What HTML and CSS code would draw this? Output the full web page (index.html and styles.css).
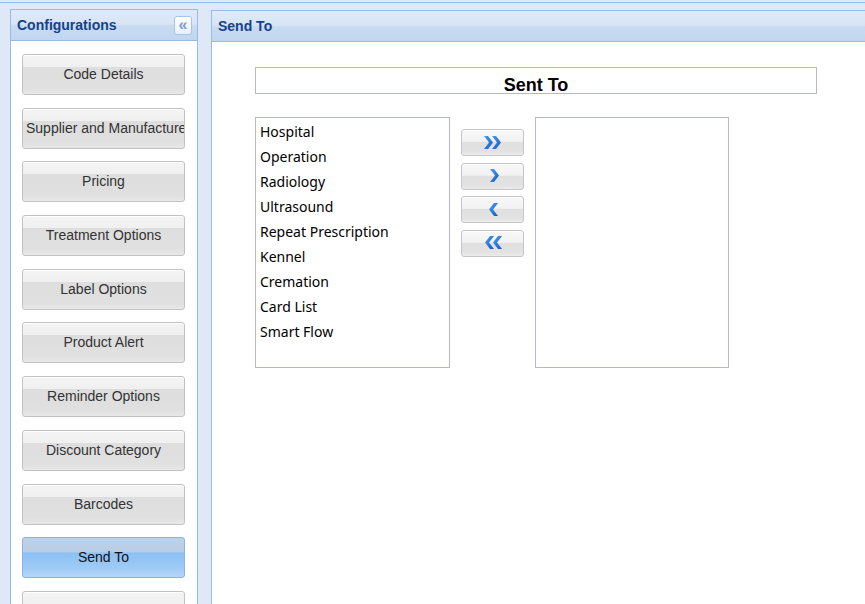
FILE: index.html
```html
<!DOCTYPE html>
<html lang="en">
<head>
    <meta charset="UTF-8">
    <title>Configurations - Send To</title>
    <link rel="stylesheet" href="styles.css">
</head>
<body>
    <svg width="0" height="0" class="defs">
        <defs>
            <linearGradient id="arrowBlue" x1="0" y1="0" x2="1" y2="1">
                <stop offset="0" stop-color="#4aa0ee" />
                <stop offset="1" stop-color="#1658c4" />
            </linearGradient>
        </defs>
    </svg>
    <div class="topline"></div>
    <div class="layout">
        <!-- Left: configuration menu -->
        <aside class="panel side">
            <div class="panel-header">
                <span class="panel-title">Configurations</span>
                <span class="collapse-btn">&laquo;</span>
            </div>
            <div class="side-body">
                <button class="menu-btn">Code Details</button>
                <button class="menu-btn long">Supplier and Manufacturer</button>
                <button class="menu-btn">Pricing</button>
                <button class="menu-btn">Treatment Options</button>
                <button class="menu-btn">Label Options</button>
                <button class="menu-btn">Product Alert</button>
                <button class="menu-btn">Reminder Options</button>
                <button class="menu-btn">Discount Category</button>
                <button class="menu-btn">Barcodes</button>
                <button class="menu-btn active">Send To</button>
                <button class="menu-btn"></button>
            </div>
        </aside>

        <!-- Right: Send To settings -->
        <section class="panel main">
            <div class="panel-header">
                <span class="panel-title">Send To</span>
            </div>
            <div class="main-body">
                <div class="title-box">Sent To</div>
                <div class="picker">
                    <ul class="list-box">
                        <li>Hospital</li>
                        <li>Operation</li>
                        <li>Radiology</li>
                        <li>Ultrasound</li>
                        <li>Repeat Prescription</li>
                        <li>Kennel</li>
                        <li>Cremation</li>
                        <li>Card List</li>
                        <li>Smart Flow</li>
                    </ul>
                    <div class="move-btns">
                        <button class="move-btn" title="Add all">
                            <svg width="18" height="13" viewBox="0 0 18 13"><polygon points="0,0 4,0 9,6.5 4,13 0,13 5,6.5" /><polygon points="8,0 12,0 17,6.5 12,13 8,13 13,6.5" /></svg>
                        </button>
                        <button class="move-btn" title="Add">
                            <svg width="18" height="13" viewBox="0 0 18 13"><polygon points="6,0 10,0 15,6.5 10,13 6,13 11,6.5" /></svg>
                        </button>
                        <button class="move-btn" title="Remove">
                            <svg width="18" height="13" viewBox="0 0 18 13"><polygon points="14,0 10,0 5,6.5 10,13 14,13 9,6.5" /></svg>
                        </button>
                        <button class="move-btn" title="Remove all">
                            <svg width="18" height="13" viewBox="0 0 18 13"><polygon points="10,0 6,0 1,6.5 6,13 10,13 5,6.5" /><polygon points="18,0 14,0 9,6.5 14,13 18,13 13,6.5" /></svg>
                        </button>
                    </div>
                    <ul class="list-box"></ul>
                </div>
            </div>
        </section>
    </div>
</body>
</html>
```

FILE: styles.css
```css
html, body {
    margin: 0;
    height: 100%;
    overflow: hidden;
}

body {
    background-color: #dfe8f6;
    font-family: "Liberation Sans", Arial, sans-serif;
    font-size: 14px;
    color: #333;
}

.defs {
    position: absolute;
}

.topline {
    height: 2px;
    border-bottom: 1px solid #99bbe8;
}

.layout {
    display: flex;
    align-items: flex-start;
    gap: 13px;
    padding: 6px 0 0 10px;
}

/* Panels */
.panel {
    border: 1px solid #99bbe8;
    background-color: #fff;
    height: 640px;
}

.side {
    width: 186px;
    flex: none;
}

.main {
    flex: 1;
    margin-top: 1px;
    border-right: none;
}

.panel-header {
    height: 30px;
    display: flex;
    align-items: center;
    justify-content: space-between;
    padding: 0 5px 0 6px;
    border-bottom: 1px solid #99bbe8;
    background: linear-gradient(#e0ebf8, #d6e4f5 48%, #c8dbf1 52%, #c2d6f0);
}

.panel-title {
    font-weight: bold;
    font-size: 14px;
    color: #15428b;
}

.collapse-btn {
    width: 16px;
    height: 17px;
    line-height: 15px;
    text-align: center;
    font-size: 16px;
    font-weight: bold;
    color: #7a9bd0;
    background: linear-gradient(#ffffff, #e8f0fb);
    border: 1px solid #a8c4ea;
    border-radius: 3px;
    margin-top: 1px;
}

/* Side menu */
.side-body {
    display: flex;
    flex-direction: column;
    gap: 12.7px;
    padding: 13px 11px 0 11px;
}

.menu-btn {
    width: 163px;
    height: 41px;
    padding: 0 0 1px 0;
    font-family: "Liberation Sans", Arial, sans-serif;
    font-size: 14px;
    color: #333;
    white-space: nowrap;
    overflow: hidden;
    border: 1px solid #c2c2c2;
    border-radius: 3px;
    background: linear-gradient(#f4f4f4, #f0f0f0 30%, #dedede 32%, #e0e0e0 85%, #e8e8e8);
    box-shadow: inset 0 1px 0 #fff;
    flex: none;
}

.menu-btn.long {
    text-align: left;
    padding-left: 3px;
}

.menu-btn.active {
    color: #111;
    border-color: #8eb3e0;
    background: linear-gradient(#bdd1e8, #b9cee6 36%, #8cc0f5 38%, #9dcaf6 75%, #b5d6f8);
    box-shadow: none;
}

/* Main content */
.main-body {
    padding: 25px 0 0 43px;
}

.title-box {
    width: 560px;
    height: 18px;
    padding-top: 7px;
    line-height: 20px;
    border: 1px solid #b5b8cf;
    text-align: center;
    font-size: 18px;
    font-weight: bold;
    color: #000;
}

.picker {
    display: flex;
    align-items: flex-start;
    margin-top: 23px;
}

.list-box {
    list-style: none;
    margin: 0;
    padding: 1px 0 0 4px;
    width: 189px;
    height: 248px;
    border: 1px solid #b5b8cf;
    font-family: "Noto Sans", "Open Sans", sans-serif;
    font-size: 14px;
    color: #000;
}

.list-box li {
    line-height: 25px;
}

.list-box:last-child {
    width: 188px;
}

.move-btns {
    display: flex;
    flex-direction: column;
    gap: 6.5px;
    padding: 12px 11px 0 11px;
}

.move-btn {
    width: 63px;
    height: 27px;
    padding: 0 0 1px 0;
    display: flex;
    align-items: center;
    justify-content: center;
    border: 1px solid #c6c6c6;
    border-radius: 3px;
    background: linear-gradient(#f8f8f8, #f2f2f2 45%, #e0e0e0 50%, #e2e2e2 85%, #ececec);
    box-shadow: inset 0 1px 0 #fff;
}

.move-btn svg polygon {
    fill: url(#arrowBlue);
}
```
